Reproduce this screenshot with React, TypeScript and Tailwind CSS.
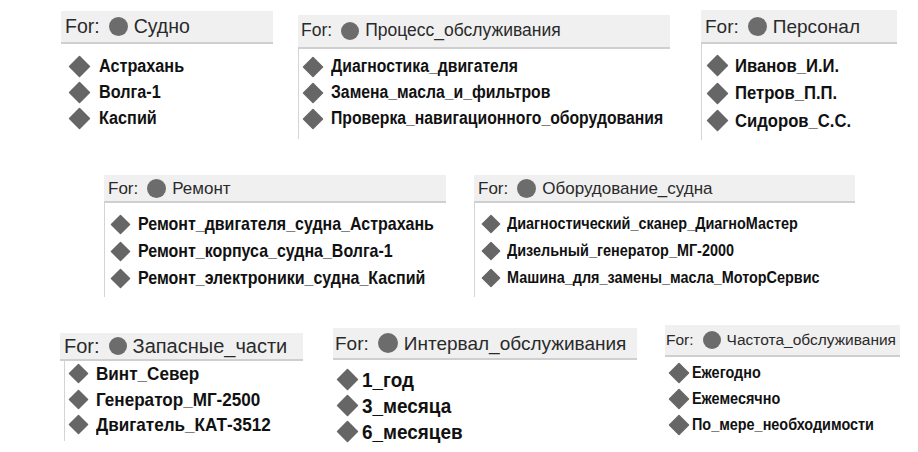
import React from 'react';

type PanelT = {
  title: string;
  items: string[];
  box: string; // position + width of the panel in its row
  head: string; // header height + font
  list: string; // padding top of the list + left border
  row: string; // row height + item font + gap after the diamond
  dot: string;
  dia: number;
};

const row1: PanelT[] = [
  {
    title: 'Судно',
    items: ['Астрахань', 'Волга-1', 'Каспий'],
    box: 'ml-[61px] mt-[1px] w-[212px]',
    head: 'h-[33px] text-[19.5px] pl-[4px]',
    list: 'pt-[9px] pl-[7px]',
    row: 'h-[26px] text-[18px] font-bold gap-[8px]',
    dot: 'w-[19px] h-[19px]',
    dia: 23,
  },
  {
    title: 'Процесс_обслуживания',
    items: [
      'Диагностика_двигателя',
      'Замена_масла_и_фильтров',
      'Проверка_навигационного_оборудования',
    ],
    box: 'ml-[25px] mt-[5px] w-[372px]',
    head: 'h-[34px] text-[17.5px] pl-[3px]',
    list: 'pt-[5px] pl-[3px] border-l border-[#d4d4d4] h-[90px]',
    row: 'h-[26px] text-[17.5px] font-bold gap-[7px]',
    dot: 'w-[18px] h-[18px]',
    dia: 22,
  },
  {
    title: 'Персонал',
    items: ['Иванов_И.И.', 'Петров_П.П.', 'Сидоров_С.С.'],
    box: 'ml-[31px] mt-0 w-[196px]',
    head: 'h-[34px] text-[19px] pl-[4px]',
    list: 'pt-[8px] pl-[4px] border-l border-[#d4d4d4] h-[96px]',
    row: 'h-[27.5px] text-[18.5px] font-bold gap-[6px]',
    dot: 'w-[19px] h-[19px]',
    dia: 23,
  },
];

const row2: PanelT[] = [
  {
    title: 'Ремонт',
    items: [
      'Ремонт_двигателя_судна_Астрахань',
      'Ремонт_корпуса_судна_Волга-1',
      'Ремонт_электроники_судна_Каспий',
    ],
    box: 'ml-[104px] mt-0 w-[342px]',
    head: 'h-[28px] text-[17px] pl-[4px]',
    list: 'pt-[8px] pl-[5px] border-l border-[#d4d4d4] h-[94px]',
    row: 'h-[27px] text-[17.75px] font-bold gap-[7px]',
    dot: 'w-[19px] h-[19px]',
    dia: 21,
  },
  {
    title: 'Оборудование_судна',
    items: [
      'Диагностический_сканер_ДиагноМастер',
      'Дизельный_генератор_МГ-2000',
      'Машина_для_замены_масла_МоторСервис',
    ],
    box: 'ml-[28px] mt-0 w-[381px]',
    head: 'h-[28px] text-[17px] pl-[4px]',
    list: 'pt-[7px] pl-[6px] border-l border-[#d4d4d4] h-[94px]',
    row: 'h-[27px] text-[16px] font-bold gap-[6px]',
    dot: 'w-[19px] h-[19px]',
    dia: 20,
  },
];

const row3: PanelT[] = [
  {
    title: 'Запасные_части',
    items: ['Винт_Север', 'Генератор_МГ-2500', 'Двигатель_КАТ-3512'],
    box: 'ml-[60px] mt-[8px] w-[243px]',
    head: 'h-[28px] text-[20px] pl-[4px]',
    list: 'pt-[0px] pl-[3px] border-l border-[#d4d4d4] ml-[4px] h-[80px]',
    row: 'h-[25.5px] text-[19px] font-bold gap-[7px]',
    dot: 'w-[18px] h-[18px]',
    dia: 21,
  },
  {
    title: 'Интервал_обслуживания',
    items: ['1_год', '3_месяца', '6_месяцев'],
    box: 'ml-[30px] mt-[3px] w-[304px]',
    head: 'h-[32px] text-[19px] pl-[2px]',
    list: 'pt-[6px] pl-[3px]',
    row: 'h-[26px] text-[21px] font-bold gap-[3px]',
    dot: 'w-[20px] h-[20px]',
    dia: 23,
  },
  {
    title: 'Частота_обслуживания',
    items: ['Ежегодно', 'Ежемесячно', 'По_мере_необходимости'],
    box: 'ml-[28px] mt-0 w-[235px]',
    head: 'h-[32px] text-[15.5px] pl-[1px]',
    list: 'pt-[3px] pl-[3px]',
    row: 'h-[26px] text-[16px] font-bold gap-[2px]',
    dot: 'w-[18px] h-[18px]',
    dia: 22,
  },
];

const Diamond: React.FC<{ size: number }> = ({ size }) => (
  <svg width={size} height={size} viewBox="0 0 22 22" className="shrink-0">
    <polygon
      points="11,1.5 20.5,11 11,20.5 1.5,11"
      fill="#666666"
      stroke="#666666"
      strokeWidth="1.5"
      strokeLinejoin="round"
    />
  </svg>
);

const Panel: React.FC<{ p: PanelT }> = ({ p }) => {
  return (
    <div className={`flex flex-col ${p.box}`}>
      <div
        className={`flex items-center bg-[#f0f0f0] border-b-2 border-[#cfcfcf] text-[#2a2a2a] leading-none whitespace-nowrap ${p.head}`}
      >
        <span>For:</span>
        <span className={`inline-block shrink-0 rounded-full bg-[#6c6c6c] ml-[9px] mr-[6px] ${p.dot}`} />
        <span>{p.title}</span>
      </div>
      <div className={`flex flex-col ${p.list}`}>
        {p.items.map((it) => (
          <div key={it} className={`flex items-center text-[#111] leading-none ${p.row}`}>
            <Diamond size={p.dia} />
            <span className="inline-block origin-left scale-x-[0.9] whitespace-nowrap">
              {it}
            </span>
          </div>
        ))}
      </div>
    </div>
  );
};

export default function App() {
  return (
    <div className="w-[918px] h-[452px] bg-white overflow-hidden font-['Liberation_Sans',Arial,sans-serif]">
      <div className="flex items-start h-[175px] pt-[10px]">
        {row1.map((p) => (
          <Panel key={p.title} p={p} />
        ))}
      </div>
      <div className="flex items-start h-[150px]">
        {row2.map((p) => (
          <Panel key={p.title} p={p} />
        ))}
      </div>
      <div className="flex items-start">
        {row3.map((p) => (
          <Panel key={p.title} p={p} />
        ))}
      </div>
    </div>
  );
}
